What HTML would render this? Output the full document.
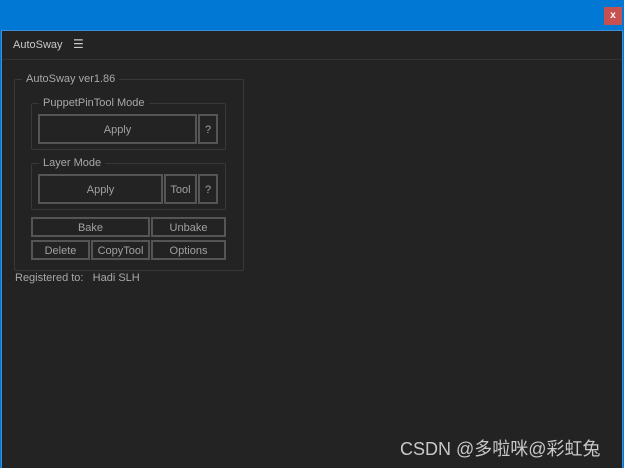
<!DOCTYPE html>
<html><head><meta charset="utf-8"><style>
*{margin:0;padding:0;box-sizing:border-box}
body{width:624px;height:468px;background:#0078d4;position:relative;overflow:hidden;font-family:"Liberation Sans","DejaVu Sans",sans-serif;font-size:11px;color:#a8a8a8}
.win{position:absolute;left:1px;top:30px;width:622px;height:438px;background:#232323;border:1px solid #3a8fd8;border-bottom:none}
.a{position:absolute}
.close{position:absolute;left:604px;top:7px;width:18px;height:18px;background:#c75050;color:#fff;font-size:10px;font-weight:bold;text-align:center;line-height:17px}
.hdr{position:absolute;left:0;top:0;width:620px;height:29px;border-bottom:1px solid #333}
.grp{position:absolute;border:1px solid #383838;border-radius:2px}
.lbl{position:absolute;background:#232323;padding:0 4px;color:#a8a8a8;font-size:11px;line-height:12px}
.btn{position:absolute;border:2px solid #555;background:#232323;color:#a0a0a0;text-align:center;font-size:11px;display:flex;align-items:center;justify-content:center;padding-top:1px}
</style></head><body>
<div class="close">x</div>
<div class="win">
 <div class="hdr"><span class="a" style="left:11px;top:8px;color:#c8c8c8">AutoSway</span><span class="a" style="left:71px;top:6px;color:#c8c8c8;font-size:12px">☰</span></div>
</div>
<div class="grp" style="left:14px;top:79px;width:230px;height:192px"></div>
<div class="lbl" style="left:22px;top:73px">AutoSway ver1.86</div>
<div class="grp" style="left:31px;top:103px;width:195px;height:47px"></div>
<div class="lbl" style="left:39px;top:97px">PuppetPinTool Mode</div>
<div class="btn" style="left:38px;top:114px;width:159px;height:30px">Apply</div>
<div class="btn" style="left:198px;top:114px;width:20px;height:30px">?</div>
<div class="grp" style="left:31px;top:163px;width:195px;height:47px"></div>
<div class="lbl" style="left:39px;top:157px">Layer Mode</div>
<div class="btn" style="left:38px;top:174px;width:125px;height:30px">Apply</div>
<div class="btn" style="left:164px;top:174px;width:33px;height:30px">Tool</div>
<div class="btn" style="left:198px;top:174px;width:20px;height:30px">?</div>
<div class="btn" style="left:31px;top:217px;width:119px;height:20px">Bake</div>
<div class="btn" style="left:151px;top:217px;width:75px;height:20px">Unbake</div>
<div class="btn" style="left:31px;top:240px;width:59px;height:20px">Delete</div>
<div class="btn" style="left:91px;top:240px;width:59px;height:20px">CopyTool</div>
<div class="btn" style="left:151px;top:240px;width:75px;height:20px">Options</div>
<div class="a" style="left:15px;top:272px">Registered to:&nbsp;&nbsp; Hadi SLH</div>
<div class="a" style="left:400px;top:435px;font-size:18px;color:#c8c8c8;font-family:'Liberation Sans','Noto Sans CJK SC',sans-serif;white-space:nowrap">CSDN @多啦咪@彩虹兔</div>
</body></html>
